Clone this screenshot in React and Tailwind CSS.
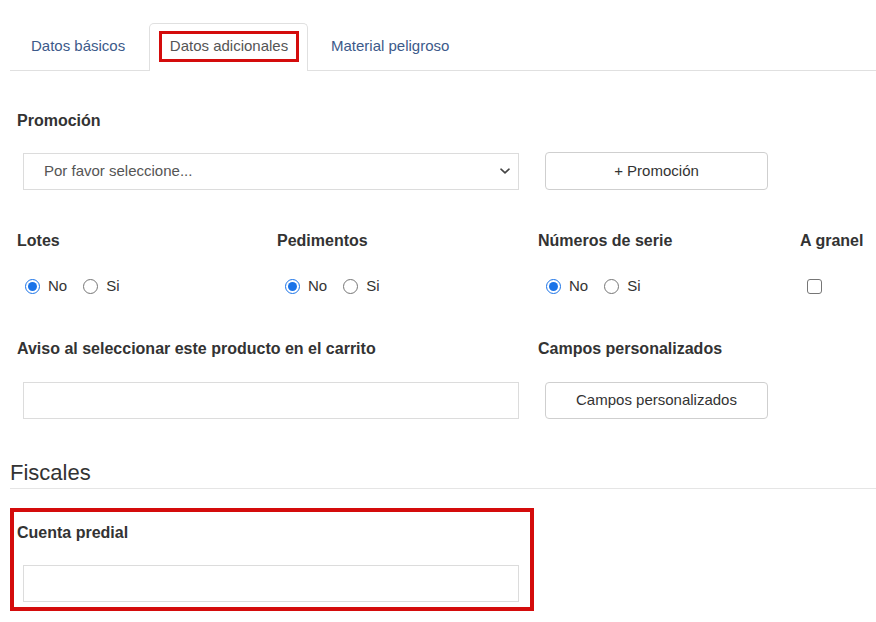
import React from "react";

function Radio({ checked }) {
  return checked ? (
    <span className="w-[15px] h-[15px] shrink-0 rounded-full border-[1.5px] border-[#1a73e8] flex items-center justify-center bg-white">
      <span className="w-[9px] h-[9px] rounded-full bg-[#1a73e8]" />
    </span>
  ) : (
    <span className="w-[15px] h-[15px] shrink-0 block rounded-full border border-[#767676] bg-white" />
  );
}

function RadioGroup() {
  return (
    <div className="flex items-center h-[20px] pl-[8px] text-[15px] text-[#333]">
      <Radio checked />
      <span className="ml-[8px]">No</span>
      <span className="ml-[16px] flex items-center"><Radio /></span>
      <span className="ml-[8px]">Si</span>
    </div>
  );
}

function Label({ children }) {
  return <div className="h-[22px] leading-[22px] text-[16px] font-bold text-[#333]">{children}</div>;
}

export default function App() {
  return (
    <div
      className="w-[876px] h-[622px] bg-white overflow-hidden text-[#333]"
      style={{ fontFamily: '"Liberation Sans", Arial, sans-serif' }}
    >
      {/* Tabs */}
      <div className="pt-[23px] pl-[10px]">
        <div className="flex items-end border-b border-[#e0e0e0] h-[48px]">
          <div className="h-[47px] w-[139px] pl-[21px] flex items-center text-[15px] text-[#3c5a8a]">Datos básicos</div>
          <div className="h-[48px] w-[159px] -mb-px border border-b-0 border-[#e0e0e0] rounded-t-[5px] bg-white flex items-start pt-[7px] pl-[9px]">
            <div className="h-[31px] w-[140px] border-[3px] border-[#d40c0c] flex items-center justify-center text-[15px] text-[#555]">
              Datos adicionales
            </div>
          </div>
          <div className="h-[47px] pl-[23px] flex items-center text-[15px] text-[#3c5a8a]">Material peligroso</div>
        </div>
      </div>

      {/* Content */}
      <div className="pl-[17px]">
        <div className="mt-[39px]">
          <Label>Promoción</Label>
        </div>
        <div className="mt-[20px] flex items-center">
          <div className="ml-[6px] w-[496px] h-[37px] border border-[#dcdcdc] flex items-center justify-between pl-[20px] pr-[6px] text-[15px] text-[#555]">
            <span>Por favor seleccione...</span>
            <svg width="14" height="14" viewBox="0 0 14 14">
              <path d="M3 5.2 L7 8.8 L11 5.2" fill="none" stroke="#444" strokeWidth="1.6" strokeLinecap="round" strokeLinejoin="round" />
            </svg>
          </div>
          <div className="ml-[26px] w-[223px] h-[38px] border border-[#cfcfcf] rounded-[4px] flex items-center justify-center text-[15px] text-[#333]">
            + Promoción
          </div>
        </div>

        <div className="mt-[40px] grid grid-cols-[260px_261px_262px_80px]">
          <div>
            <Label>Lotes</Label>
            <div className="mt-[24px]"><RadioGroup /></div>
          </div>
          <div>
            <Label>Pedimentos</Label>
            <div className="mt-[24px]"><RadioGroup /></div>
          </div>
          <div>
            <Label>Números de serie</Label>
            <div className="mt-[24px]"><RadioGroup /></div>
          </div>
          <div>
            <Label>A granel</Label>
            <div className="mt-[24px] h-[20px] flex items-center pl-[7px]">
              <span className="w-[15px] h-[15px] block rounded-[3px] border border-[#767676] bg-white" />
            </div>
          </div>
        </div>

        <div className="mt-[42px] grid grid-cols-[521px_300px]">
          <div>
            <Label>Aviso al seleccionar este producto en el carrito</Label>
            <div className="mt-[22px] ml-[6px] w-[496px] h-[37px] border border-[#dcdcdc]" />
          </div>
          <div>
            <Label>Campos personalizados</Label>
            <div className="mt-[22px] ml-[7px] w-[223px] h-[37px] border border-[#cfcfcf] rounded-[4px] flex items-center justify-center text-[15px] text-[#333]">
              Campos personalizados
            </div>
          </div>
        </div>
      </div>

      {/* Fiscales */}
      <div className="pl-[10px]">
        <div className="mt-[41px] h-[29px] border-b border-[#e5e5e5] text-[22px] leading-[26px] text-[#333]">Fiscales</div>
        <div className="mt-[19px] w-[524px] h-[103px] border-[4px] border-[#d40c0c] pt-[10px] pl-[3px]">
          <Label>Cuenta predial</Label>
          <div className="mt-[21px] ml-[6px] w-[496px] h-[37px] border border-[#dcdcdc]" />
        </div>
      </div>
    </div>
  );
}
